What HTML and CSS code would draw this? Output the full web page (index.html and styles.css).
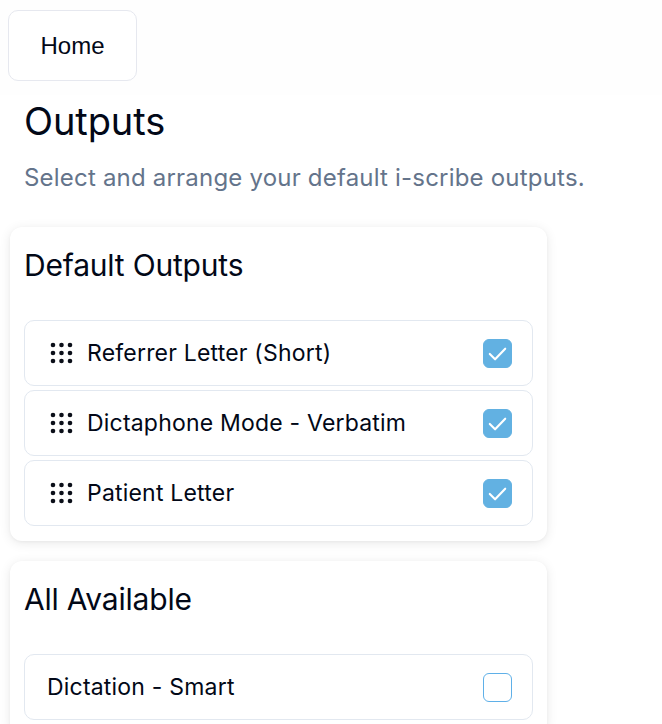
FILE: index.html
```html
<!DOCTYPE html>
<html lang="en">
<head>
<meta charset="utf-8">
<title>Outputs</title>
<link rel="stylesheet" href="styles.css">
</head>
<body>
<header class="topbar">
  <button class="home-btn" type="button">Home</button>
</header>
<main class="page">
  <h1 class="page-title">Outputs</h1>
  <p class="page-sub">Select and arrange your default i-scribe outputs.</p>

  <section class="card">
    <h2 class="card-title">Default Outputs</h2>
    <ul class="list">
      <li class="row">
        <svg class="grip" width="26" height="24" viewBox="0 0 26 24" aria-hidden="true">
          <g fill="#0b0f19">
            <circle cx="6" cy="4" r="2.3"/><circle cx="14.5" cy="4" r="2.3"/><circle cx="23" cy="4" r="2.3"/>
            <circle cx="6" cy="12" r="2.3"/><circle cx="14.5" cy="12" r="2.3"/><circle cx="23" cy="12" r="2.3"/>
            <circle cx="6" cy="20" r="2.3"/><circle cx="14.5" cy="20" r="2.3"/><circle cx="23" cy="20" r="2.3"/>
          </g>
        </svg>
        <span class="row-label">Referrer Letter (Short)</span>
        <span class="check is-on"><svg width="28" height="28" viewBox="0 0 28 28"><path d="M6 15 L11.5 20.5 L22 9.5" fill="none" stroke="#fff" stroke-width="2.2" stroke-linecap="round" stroke-linejoin="round"/></svg></span>
      </li>
      <li class="row">
        <svg class="grip" width="26" height="24" viewBox="0 0 26 24" aria-hidden="true">
          <g fill="#0b0f19">
            <circle cx="6" cy="4" r="2.3"/><circle cx="14.5" cy="4" r="2.3"/><circle cx="23" cy="4" r="2.3"/>
            <circle cx="6" cy="12" r="2.3"/><circle cx="14.5" cy="12" r="2.3"/><circle cx="23" cy="12" r="2.3"/>
            <circle cx="6" cy="20" r="2.3"/><circle cx="14.5" cy="20" r="2.3"/><circle cx="23" cy="20" r="2.3"/>
          </g>
        </svg>
        <span class="row-label">Dictaphone Mode - Verbatim</span>
        <span class="check is-on"><svg width="28" height="28" viewBox="0 0 28 28"><path d="M6 15 L11.5 20.5 L22 9.5" fill="none" stroke="#fff" stroke-width="2.2" stroke-linecap="round" stroke-linejoin="round"/></svg></span>
      </li>
      <li class="row">
        <svg class="grip" width="26" height="24" viewBox="0 0 26 24" aria-hidden="true">
          <g fill="#0b0f19">
            <circle cx="6" cy="4" r="2.3"/><circle cx="14.5" cy="4" r="2.3"/><circle cx="23" cy="4" r="2.3"/>
            <circle cx="6" cy="12" r="2.3"/><circle cx="14.5" cy="12" r="2.3"/><circle cx="23" cy="12" r="2.3"/>
            <circle cx="6" cy="20" r="2.3"/><circle cx="14.5" cy="20" r="2.3"/><circle cx="23" cy="20" r="2.3"/>
          </g>
        </svg>
        <span class="row-label">Patient Letter</span>
        <span class="check is-on"><svg width="28" height="28" viewBox="0 0 28 28"><path d="M6 15 L11.5 20.5 L22 9.5" fill="none" stroke="#fff" stroke-width="2.2" stroke-linecap="round" stroke-linejoin="round"/></svg></span>
      </li>
    </ul>
  </section>

  <section class="card">
    <h2 class="card-title">All Available</h2>
    <ul class="list">
      <li class="row">
        <span class="row-label">Dictation - Smart</span>
        <span class="check"></span>
      </li>
    </ul>
  </section>
</main>
</body>
</html>
```

FILE: styles.css
```css
* { box-sizing: border-box; }
html, body { margin: 0; padding: 0; background: #ffffff; }
body {
  font-family: Inter, "Noto Sans", "Liberation Sans", sans-serif;
  color: #020817;
}

.topbar {
  height: 95px;
  background: #fefefe;
  padding: 10px 8px 0;
}
.home-btn {
  width: 129px;
  height: 71px;
  border: 1px solid #e6e8ef;
  border-radius: 10px;
  background: #ffffff;
  font-family: "Liberation Sans", Arial, sans-serif;
  font-size: 24px;
  color: #020817;
  padding: 0;
  line-height: 1;
}

.page {
  padding: 6px 10px 20px;
}
.page-title {
  margin: 0 14px;
  font-size: 38px;
  line-height: 40px;
  font-weight: 400;
  letter-spacing: -0.1px;
  color: #020817;
}
.page-sub {
  margin: 21px 14px 33px;
  font-size: 24px;
  line-height: 32px;
  letter-spacing: 0.2px;
  color: #64748b;
}

.card {
  width: 537px;
  background: #ffffff;
  border-radius: 12px;
  box-shadow: 0 2px 12px rgba(0, 0, 0, 0.09), 0 1px 3px rgba(0, 0, 0, 0.04);
  padding: 20px 14px 15px;
  margin-bottom: 20px;
}
.card-title {
  margin: 0 0 37px;
  font-size: 30px;
  line-height: 36px;
  font-weight: 400;
  letter-spacing: -0.2px;
  color: #020817;
}

.list {
  list-style: none;
  margin: 0;
  padding: 0;
  display: flex;
  flex-direction: column;
  gap: 4px;
}
.row {
  height: 66px;
  border: 1px solid #e2e8f0;
  border-radius: 10px;
  display: flex;
  align-items: center;
  padding: 0 20px 0 22px;
}
.grip {
  flex: none;
  margin-right: 14px;
}
.row-label {
  flex: 1;
  font-size: 23px;
  line-height: 28px;
  letter-spacing: 0.2px;
  color: #020817;
}
.check {
  flex: none;
  width: 29px;
  height: 29px;
  border-radius: 6px;
  border: 1.5px solid #5fb0e8;
  background: #ffffff;
  display: flex;
  align-items: center;
  justify-content: center;
}
.check.is-on {
  background: #62b1e2;
  border-color: #62b1e2;
}
```
